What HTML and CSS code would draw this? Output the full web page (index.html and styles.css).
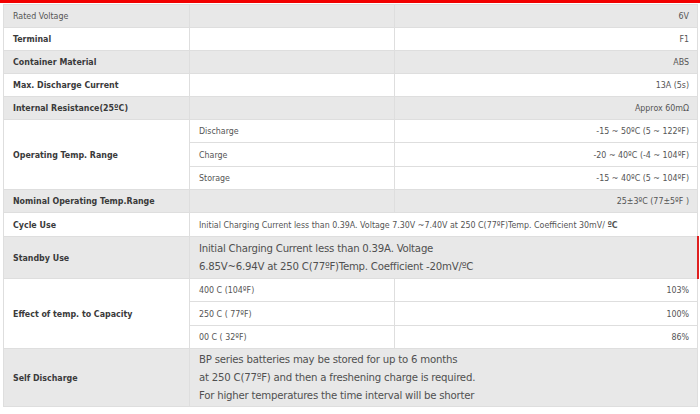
FILE: index.html
```html
<!DOCTYPE html>
<html>
<head>
<meta charset="utf-8">
<link rel="stylesheet" href="styles.css">
</head>
<body>
<div class="topbar"></div>
<table class="spec">
  <colgroup><col class="c1"><col class="c2"><col class="c3"></colgroup>
  <tr class="g">
    <td class="lbl light">Rated Voltage</td><td></td><td class="val">6V</td>
  </tr>
  <tr>
    <td class="lbl">Terminal</td><td></td><td class="val">F1</td>
  </tr>
  <tr class="g">
    <td class="lbl">Container Material</td><td></td><td class="val">ABS</td>
  </tr>
  <tr>
    <td class="lbl">Max. Discharge Current</td><td></td><td class="val">13A (5s)</td>
  </tr>
  <tr class="g">
    <td class="lbl">Internal Resistance(25ºC)</td><td></td><td class="val">Approx 60mΩ</td>
  </tr>
  <tr>
    <td class="lbl" rowspan="3">Operating Temp. Range</td><td class="sub">Discharge</td><td class="val">-15 ~ 50ºC (5 ~ 122ºF)</td>
  </tr>
  <tr class="mid">
    <td class="sub">Charge</td><td class="val">-20 ~ 40ºC (-4 ~ 104ºF)</td>
  </tr>
  <tr>
    <td class="sub">Storage</td><td class="val">-15 ~ 40ºC (5 ~ 104ºF)</td>
  </tr>
  <tr class="g">
    <td class="lbl">Nominal Operating Temp.Range</td><td></td><td class="val">25±3ºC (77±5ºF )</td>
  </tr>
  <tr class="mid">
    <td class="lbl">Cycle Use</td><td class="sub" colspan="2">Initial Charging Current less than 0.39A. Voltage 7.30V ~7.40V at 250 C(77ºF)Temp. Coefficient 30mV/ <b>ºC</b></td>
  </tr>
  <tr class="g tall">
    <td class="lbl">Standby Use</td><td class="big redge" colspan="2">Initial Charging Current less than 0.39A. Voltage<br>6.85V~6.94V at 250 C(77ºF)Temp. Coefficient -20mV/ºC</td>
  </tr>
  <tr>
    <td class="lbl" rowspan="3">Effect of temp. to Capacity</td><td class="sub">400 C (104ºF)</td><td class="val">103%</td>
  </tr>
  <tr class="mid">
    <td class="sub">250 C ( 77ºF)</td><td class="val">100%</td>
  </tr>
  <tr>
    <td class="sub">00 C ( 32ºF)</td><td class="val">86%</td>
  </tr>
  <tr class="g tall3">
    <td class="lbl">Self Discharge</td><td class="big" colspan="2">BP series batteries may be stored for up to 6 months<br>at 250 C(77ºF) and then a freshening charge is required.<br>For higher temperatures the time interval will be shorter</td>
  </tr>
</table>
</body>
</html>
```
FILE: styles.css
```css
html, body {
  margin: 0;
  padding: 0;
  background: #ffffff;
}
body {
  font-family: "DejaVu Sans Condensed", "DejaVu Sans", "Liberation Sans", sans-serif;
  font-size: 8.8px;
  color: #555555;
}
.topbar {
  height: 3px;
  background: #f20000;
}
.spec {
  border-collapse: collapse;
  margin: 1px 3px 0;
  width: 694px;
  table-layout: fixed;
}
.c1 { width: 186px; }
.c2 { width: 205px; }
.c3 { width: 303px; }
.spec td {
  border: 1px solid #dedede;
  height: 22px;
  padding: 0 8px 0 9px;
  vertical-align: middle;
  line-height: 12px;
}
.spec tr.mid td {
  height: 23px;
}
.spec tr.g td {
  background: #e8e8e8;
}
.lbl {
  font-weight: bold;
  color: #3a3a3a;
}
.lbl.light {
  font-weight: normal;
  color: #555555;
}
.val {
  text-align: right;
}
.sub {
  color: #555555;
}
.spec td.big {
  font-size: 11.3px;
  letter-spacing: -0.22px;
  line-height: 18px;
  padding-top: 1px;
  color: #505050;
}
.spec tr.tall td {
  height: 40px;
}
.spec tr.tall3 td {
  height: 56px;
}
.spec td.redge {
  border-right: 2px solid #e02020;
}
```
